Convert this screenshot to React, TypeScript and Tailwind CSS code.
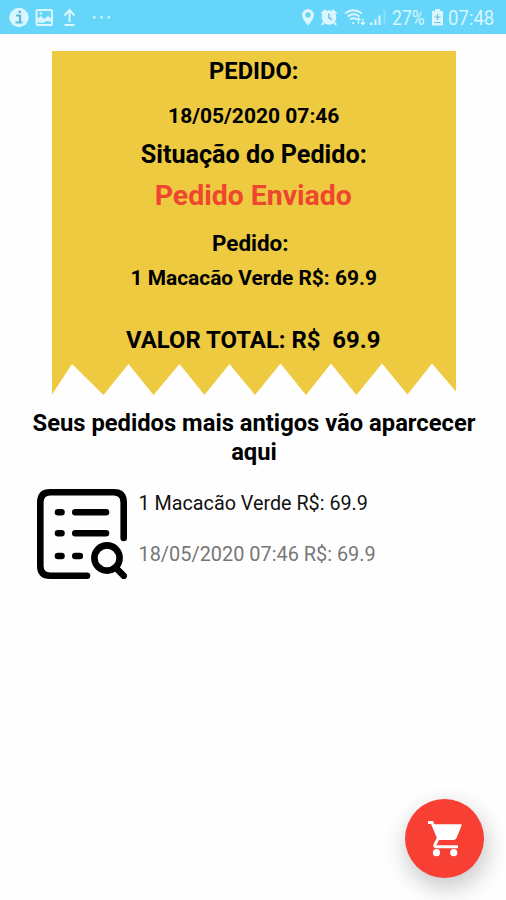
function StatusBar() {
    return <div className="flex h-[34px] justify-between bg-[#66d5fa] text-[#daf6fe]">
        <svg width="120" height="34" viewBox="0 0 120 34" fill="none">
            <circle cx="19" cy="17.5" r="9.7" fill="currentColor" />
            <path d="M16 15.5h4v6.5M15.5 22.5h7M18.5 11.8h2.5" stroke="#58b9dc" strokeWidth="2.2" />
            <rect x="36.5" y="10" width="15.5" height="15" rx="1" stroke="currentColor" strokeWidth="2" />
            <path d="M37 22v-3l4-3 3 3 4-3 4 3v3l-5-1-4 2z" fill="currentColor" />
            <circle cx="41" cy="13.5" r="1.3" fill="currentColor" />
            <path d="M69.5 22V11M64.5 15.5l5-5.5 5 5.5M64.5 25h10" stroke="currentColor" strokeWidth="2" />
            <path d="M93 16.2h2.4v2.4H93zM100.3 16.2h2.4v2.4h-2.4zM107.5 16.2h2.4v2.4h-2.4z" fill="currentColor" />
        </svg>
        <div className="flex">
            <svg width="92" height="34" viewBox="299 0 92 34" fill="none">
                <path fillRule="evenodd" d="M307 9a6 6 0 0 0-6 6c0 4 6 10.5 6 10.5s6-6.5 6-10.5a6 6 0 0 0-6-6zm0 3.300a2.700 2.700 0 1 1 0 5.400a2.700 2.700 0 0 1 0-5.400z" fill="currentColor" />
                <circle cx="328" cy="17.5" r="7.3" fill="currentColor" />
                <path d="M320.5 13.5l4-3.5M335.5 13.5l-4-3.5M322.5 22.5l-1.5 2.500M333.500 22.500l1.500 2.500" stroke="currentColor" strokeWidth="2.2" />
                <path d="M328 13.5v4.5l3 1.700" stroke="#66c4e4" strokeWidth="1.5" />
                <path d="M344 13.500q8.500-6.500 17 0M346.500 16.500q6-4.500 12 0M349 19.500q3.500-2.500 6.500 0M351.500 22.300l1.500 1.500" stroke="currentColor" strokeWidth="1.8" />
                <path d="M357.500 24v-6M355.500 20l2-2 2 2M362 18.500v6M360 22.500l2 2 2-2" stroke="currentColor" strokeWidth="1.3" />
                <path d="M369 22.500h2.500V25H369zM373.500 19.500h2V25h-2zM377.500 15.500h2V25h-2z" fill="currentColor" />
                <path d="M383.500 10v15" stroke="#8fe0fb" strokeWidth="1.8" />
            </svg>
            <div className="w-[38px] whitespace-nowrap text-[20px] leading-[36px]"><span className="inline-block origin-left scale-x-[0.88]">27%</span></div>
            <svg width="17" height="34" viewBox="430 0 17 34" fill="none">
                <path d="M435 9h5v2h3v14.500h-11V11h3z" fill="currentColor" />
                <path d="M437.500 14v6M434.500 17h6M434.500 22.500h6" stroke="#6dbddc" strokeWidth="1.2" />
            </svg>
            <div className="w-[59px] whitespace-nowrap pl-px text-[20px] leading-[36px]"><span className="inline-block origin-left scale-x-[0.93]">07:48</span></div>
        </div>
    </div>
}

function Ticket() {
    return <div className="ml-[51.5px] mt-[17px] w-[404.5px] text-center font-bold">
        <div className="h-[312px] bg-[#edca3f] pt-1">
            <p className="h-[44px] text-[23.7px] leading-[32px]">PEDIDO:</p>
            <p className="h-[38px] text-[21px] leading-[34px]">18/05/2020 07:46</p>
            <p className="h-[40px] text-[25.2px] leading-[35px]">Situação do Pedido:</p>
            <p className="h-[46px] pr-px text-[28.4px] leading-[37px] text-[#ee462f]">Pedido Enviado</p>
            <p className="h-[36px] pr-[7px] text-[22.4px] leading-[41px]">Pedido:</p>
            <p className="h-[62px] text-[20.9px] leading-[39px]">1 Macacão Verde R$: 69.9</p>
            <p className="whitespace-pre pr-px text-[23.9px] leading-[39px]">VALOR TOTAL: R$  69.9</p>
        </div>
        {/* torn paper edge */}
        <svg className="block" width="404.5" height="32" viewBox="51.5 363 404.5 32">
            <path d="M51.500 362.500V394.500L71.500 364 103 395 128 364 153 395 179 364 204 395 229 364 254.500 395 280 363.500 305.500 395 330.500 363.500 356 395 381.500 363.500 407 394.500 431.500 363.500 456 392V362.500z" fill="#edca3f" />
        </svg>
    </div>
}

function OrderIcon() {
    return <svg className="shrink-0" width="90" height="90" viewBox="0 0 90 90" fill="none" stroke="#000" strokeWidth="6.6" strokeLinecap="round">
        <path d="M86.700 49V13.300q0-10-10-10H13.300q-10 0-10 10v63.400q0 10 10 10H50" />
        <path d="M21 23.300h3.500M38.300 23.300H69M21 44.300h3.500M38.300 44.300H69M21 67h3.500M38.300 67h4.500M79.500 79.500l7.200 7.300" />
        <circle cx="70" cy="69" r="12.6" />
    </svg>
}

function CartIcon() {
    return <svg width="34" height="36" viewBox="0 0 34 36" fill="none">
        <path d="M0 1.500h4L10.500 17 7 23.500q-1 2.200 1.500 2.200H30" stroke="#fff" strokeWidth="3" />
        <path d="M4.500 3.300H33q1 0 .6 1.200L28.500 17q-.8 2-3 2H11z" fill="#fff" />
        <circle cx="8.500" cy="31.700" r="3.600" fill="#fff" />
        <circle cx="25.700" cy="31.700" r="3.600" fill="#fff" />
    </svg>
}

function OldOrder() {
    return <div className="ml-[37px] mt-[23px] flex">
        <OrderIcon />
        <div className="ml-[11.5px] text-[19.9px]">
            <p className="h-[50px] text-[19.75px] leading-[29px] text-[#111]">1 Macacão Verde R$: 69.9</p>
            <p className="leading-[31px] text-[#777]">18/05/2020 07:46 R$: 69.9</p>
        </div>
    </div>
}

export default function App() {
    return <div className="relative h-[900px] w-[506px] overflow-hidden bg-[#fefefe] font-['Roboto',sans-serif] text-black">
        <StatusBar />
        <Ticket />
        <h2 className="mt-[14px] whitespace-nowrap pl-0.5 text-center text-[23.75px] font-bold leading-[28.5px]">Seus pedidos mais antigos vão aparcecer<br />aqui</h2>
        <OldOrder />
        <button className="absolute bottom-[22px] right-[22px] flex h-[79px] w-[79px] items-center justify-center rounded-full bg-[#f73f33] text-white shadow-[2px_9px_22px_2px_rgba(0,0,0,0.2)]">
            <CartIcon />
        </button>
    </div>
}
